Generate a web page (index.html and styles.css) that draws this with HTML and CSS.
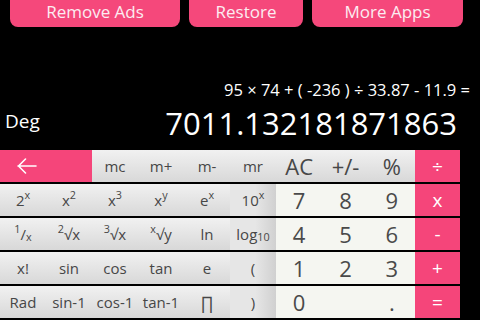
FILE: index.html
```html
<!DOCTYPE html>
<html>
<head>
<meta charset="utf-8">
<link rel="stylesheet" href="styles.css">
</head>
<body>
<div class="screen">
  <div class="topbar">
    <div class="tbtn w1">Remove Ads</div>
    <div class="tbtn w2">Restore</div>
    <div class="tbtn w3">More Apps</div>
  </div>
  <div class="display">
    <div class="expr">95 × 74 + ( -236 ) ÷ 33.87 - 11.9 =</div>
    <div class="resrow">
      <div class="mode">Deg</div>
      <div class="result">7011.132181871863</div>
    </div>
  </div>
  <div class="keys">
    <div class="k back"><svg width="20" height="16" viewBox="0 0 20 16"><path d="M1 8H19M8.5 1L1.5 8L8.5 15" fill="none" stroke="#fff" stroke-width="1.6" stroke-linecap="round" stroke-linejoin="round"/></svg></div>
    <div class="k g">mc</div>
    <div class="k g">m+</div>
    <div class="k g">m-</div>
    <div class="k g">mr</div>
    <div class="k g big">AC</div>
    <div class="k g big">+/-</div>
    <div class="k g big">%</div>
    <div class="k op">÷</div>

    <div class="k g">2<sup>x</sup></div>
    <div class="k g">x<sup>2</sup></div>
    <div class="k g">x<sup>3</sup></div>
    <div class="k g">x<sup>y</sup></div>
    <div class="k g">e<sup>x</sup></div>
    <div class="k g edge">10<sup>x</sup></div>
    <div class="k d">7</div>
    <div class="k d">8</div>
    <div class="k d">9</div>
    <div class="k op">x</div>

    <div class="k g"><sup>1</sup>/<sub>x</sub></div>
    <div class="k g"><sup>2</sup>√x</div>
    <div class="k g"><sup>3</sup>√x</div>
    <div class="k g"><sup>x</sup>√y</div>
    <div class="k g">ln</div>
    <div class="k g edge">log<sub>10</sub></div>
    <div class="k d">4</div>
    <div class="k d">5</div>
    <div class="k d">6</div>
    <div class="k op">-</div>

    <div class="k g">x!</div>
    <div class="k g">sin</div>
    <div class="k g">cos</div>
    <div class="k g">tan</div>
    <div class="k g">e</div>
    <div class="k g edge">(</div>
    <div class="k d">1</div>
    <div class="k d">2</div>
    <div class="k d">3</div>
    <div class="k op">+</div>

    <div class="k g">Rad</div>
    <div class="k g">sin-1</div>
    <div class="k g">cos-1</div>
    <div class="k g">tan-1</div>
    <div class="k g pi">∏</div>
    <div class="k g edge">)</div>
    <div class="k d">0</div>
    <div class="k d"></div>
    <div class="k d">.</div>
    <div class="k op">=</div>
  </div>
</div>
</body>
</html>
```

FILE: styles.css
```css
html, body {
  margin: 0;
  padding: 0;
  background: #000;
}
body {
  font-family: "Open Sans", "Noto Sans", sans-serif;
}
.screen {
  width: 480px;
  height: 320px;
  overflow: hidden;
  background: #000;
}
.topbar {
  display: flex;
  gap: 9px;
  padding-left: 10px;
  height: 27px;
}
.tbtn {
  background: #f5487b;
  color: #fcecf1;
  font-size: 17px;
  line-height: 23px;
  height: 27px;
  box-sizing: border-box;
  padding-bottom: 4px;
  text-align: center;
  border-radius: 0 0 8px 8px;
}
.w1 { width: 170px; }
.w2 { width: 114px; }
.w3 { width: 151px; }

.display {
  height: 123px;
  box-sizing: border-box;
  padding-top: 53px;
  color: #fff;
}
.expr {
  font-size: 16.5px;
  line-height: 20px;
  text-align: right;
  padding-right: 10px;
}
.resrow {
  display: flex;
  justify-content: space-between;
  align-items: flex-end;
  margin-top: 5px;
}
.mode {
  font-size: 19px;
  line-height: 22px;
  padding-left: 5px;
  margin-bottom: 9px;
}
.result {
  font-size: 31px;
  line-height: 36px;
  padding-right: 23px;
}

.keys {
  display: grid;
  grid-template-columns: repeat(6, 46px) repeat(3, 46.33px) 45px;
  grid-auto-rows: 32px;
  row-gap: 2px;
  width: 460px;
}
.k {
  display: flex;
  align-items: center;
  justify-content: center;
  font-size: 15px;
  color: #474747;
  line-height: 1;
}
.k sup {
  font-size: 0.72em;
  position: relative;
  top: -0.45em;
  vertical-align: baseline;
}
.k sub {
  font-size: 0.72em;
  position: relative;
  top: 0.3em;
  vertical-align: baseline;
}
.g {
  background: linear-gradient(#f1f1f1, #d8d8d8);
}
.edge {
  background: linear-gradient(to right, #e6e6e6 55%, #d0d0d0);
}
.big {
  font-size: 22px;
}
.d {
  background: #f5f6f1;
  font-size: 22px;
  color: #4a4a4a;
}
.op {
  background: #f5457a;
  color: #fff;
  font-size: 19px;
}
.back {
  grid-column: span 2;
  background: #f5457a;
  justify-content: flex-start;
  padding-left: 17px;
}
.pi {
  font-size: 17px;
}
```
